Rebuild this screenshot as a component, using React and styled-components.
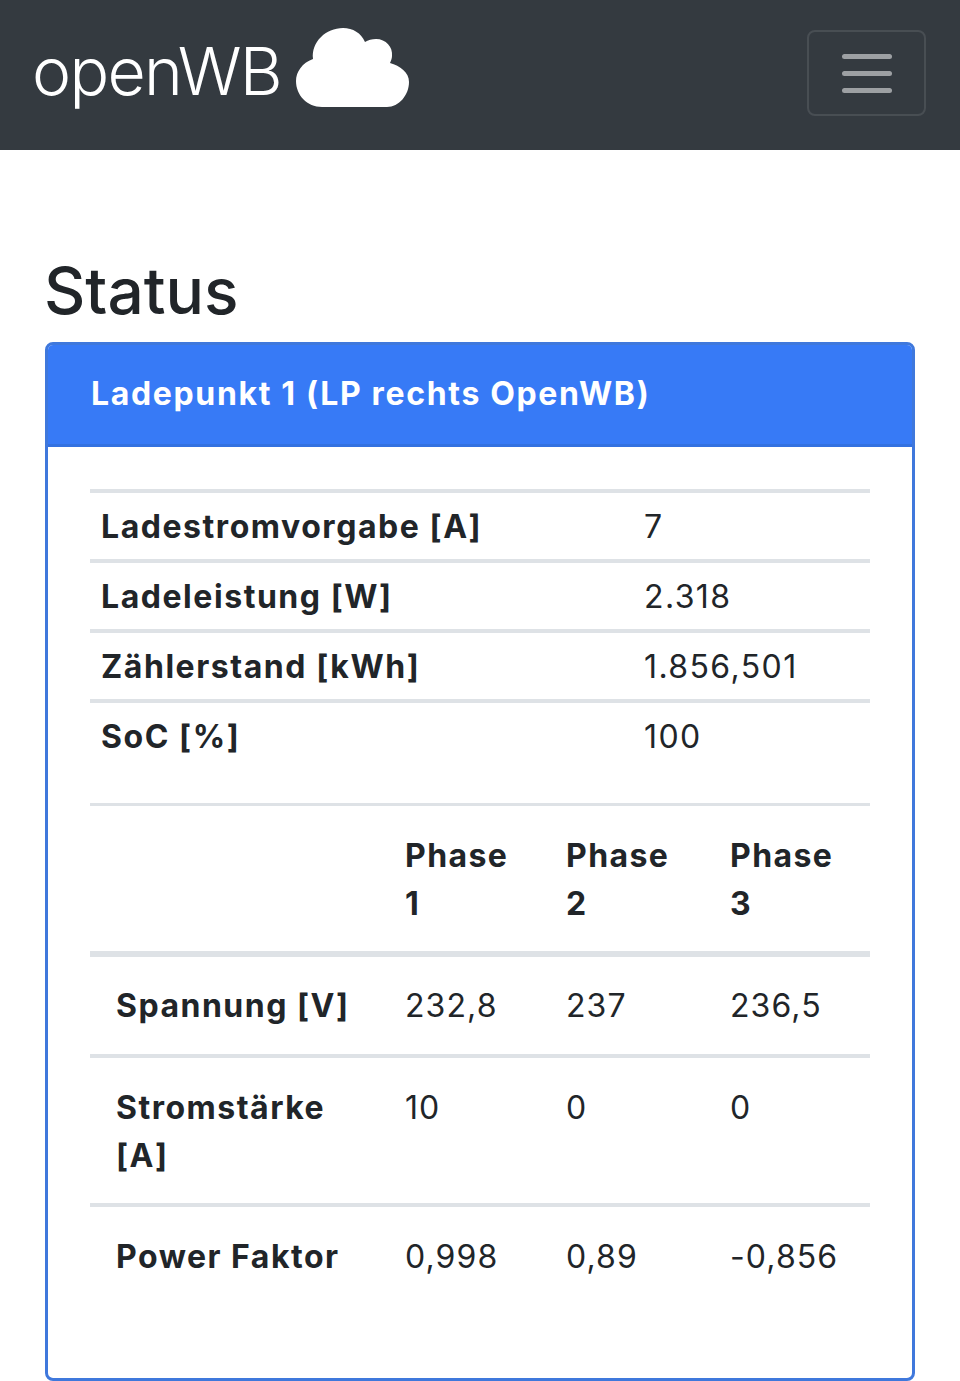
import styled, { createGlobalStyle } from "styled-components";

// Werte wie im Original, ein Ladepunkt
const summary = [
  { label: "Ladestromvorgabe [A]", value: "7" },
  { label: "Ladeleistung [W]", value: "2.318" },
  { label: "Zählerstand [kWh]", value: "1.856,501" },
  { label: "SoC [%]", value: "100" },
];

const phases = [
  { label: "Spannung [V]", values: ["232,8", "237", "236,5"] },
  { label: "Stromstärke [A]", values: ["10", "0", "0"] },
  { label: "Power Faktor", values: ["0,998", "0,89", "-0,856"] },
];

const GlobalStyle = createGlobalStyle`
  html, body {
    margin: 0;
    padding: 0;
    background: #fff;
    color: #212529;
    font-family: Inter, "Noto Sans", sans-serif;
    font-size: 32px;
    line-height: 48px;
    letter-spacing: 1.4px;
  }
`;

export default function App() {
  return (
    <>
      <GlobalStyle />
      <Navbar>
        <Brand>
          <BrandText>openWB</BrandText>
          <CloudIcon viewBox="0 0 113 80" aria-hidden="true">
            <path d="M26 79C11 79 0 67 0 53C0 44 6 35 17 31C15 14 30 0 47 0C57 0 65 5 69 14C72 12 76 11 80 11C90 11 97 19 96 28C96 30 95 33 94 35C104 38 113 44 113 54C113 67 103 79 91 79Z" fill="#fff" />
          </CloudIcon>
        </Brand>
        <Toggler aria-label="Menü">
          <TogglerBar />
          <TogglerBar />
          <TogglerBar />
        </Toggler>
      </Navbar>

      <Main>
        <PageTitle>Status</PageTitle>
        <Card>
          <CardHeader>Ladepunkt 1 (LP rechts OpenWB)</CardHeader>
          <CardBody>
            <SummaryTable>
              <colgroup>
                <col style={{ width: 543 }} />
                <col />
              </colgroup>
              <tbody>
                {summary.map(({ label, value }) => (
                  <tr key={label}>
                    <SummaryHead scope="row">{label}</SummaryHead>
                    <SummaryCell>{value}</SummaryCell>
                  </tr>
                ))}
              </tbody>
            </SummaryTable>

            <PhaseTable>
              <colgroup>
                <col style={{ width: 289 }} />
                <col style={{ width: 161 }} />
                <col style={{ width: 164 }} />
                <col />
              </colgroup>
              <thead>
                <tr>
                  <PhaseColHead />
                  <PhaseColHead>Phase 1</PhaseColHead>
                  <PhaseColHead>Phase 2</PhaseColHead>
                  <PhaseColHead>Phase 3</PhaseColHead>
                </tr>
              </thead>
              <tbody>
                {phases.map(({ label, values }) => (
                  <tr key={label}>
                    <PhaseRowHead scope="row">{label}</PhaseRowHead>
                    {values.map((v, i) => (
                      <PhaseCell key={i}>{v}</PhaseCell>
                    ))}
                  </tr>
                ))}
              </tbody>
            </PhaseTable>
          </CardBody>
        </Card>
      </Main>
    </>
  );
}

// ---------- Styles ----------

const Navbar = styled.nav`
  height: 150px;
  box-sizing: border-box;
  background: #343a40;
  display: flex;
  align-items: center;
  justify-content: space-between;
  padding: 0 34px 0 32px;
`;

const Brand = styled.a`
  display: flex;
  align-items: center;
  gap: 15px;
  color: #fff;
`;

const BrandText = styled.span`
  font-size: 66px;
  font-weight: 350;
  line-height: 80px;
  letter-spacing: -1.7px;
  margin-bottom: 8px;
`;

const CloudIcon = styled.svg`
  width: 113px;
  height: 80px;
  margin-bottom: 15px;
`;

const Toggler = styled.button`
  width: 119px;
  height: 86px;
  box-sizing: border-box;
  margin-bottom: 4px;
  background: transparent;
  border: 2px solid rgba(255, 255, 255, 0.1);
  border-radius: 8px;
  display: flex;
  flex-direction: column;
  align-items: center;
  justify-content: center;
  gap: 12px;
  padding: 0;
`;

const TogglerBar = styled.span`
  display: block;
  width: 50px;
  height: 5px;
  border-radius: 3px;
  background: rgba(255, 255, 255, 0.52);
`;

const Main = styled.main`
  padding: 0 45px;
`;

const PageTitle = styled.h1`
  margin: 0 0 0 -1px;
  padding-top: 100px;
  height: 192px;
  box-sizing: border-box;
  font-size: 64px;
  font-weight: 500;
  line-height: 82px;
  letter-spacing: 0;
`;

const Card = styled.section`
  height: 1039px;
  box-sizing: border-box;
  border: 3px solid #3f78dc;
  border-radius: 8px;
  overflow: hidden;
`;

const CardHeader = styled.h2`
  margin: -3px -3px 0;
  height: 105px;
  box-sizing: border-box;
  padding: 28px 46px 0;
  background: #377af6;
  border-bottom: 3px solid #3371e0;
  color: #fff;
  font-size: 32px;
  font-weight: 700;
  line-height: 48px;
  letter-spacing: 1.65px;
`;

const CardBody = styled.div`
  padding: 42px;
`;

const BaseTable = styled.table`
  width: 100%;
  border-collapse: collapse;
  table-layout: fixed;
`;

const SummaryTable = styled(BaseTable)`
  margin-bottom: 34px;
`;

const SummaryHead = styled.th`
  padding: 10px 11px 8px;
  border-top: 4px solid #dee2e6;
  text-align: left;
  font-weight: 700;
  letter-spacing: 1.55px;
`;

const SummaryCell = styled.td`
  padding: 10px 11px 8px;
  border-top: 4px solid #dee2e6;
`;

const PhaseTable = styled(BaseTable)``;

const PhaseColHead = styled.th`
  padding: 26px 26px 23px;
  border-top: 3px solid #dee2e6;
  border-bottom: 6px solid #dee2e6;
  text-align: left;
  font-weight: 700;
  letter-spacing: 1.4px;
`;

const PhaseRowHead = styled.th`
  padding: 26px 26px 23px;
  border-top: 4px solid #dee2e6;
  text-align: left;
  vertical-align: top;
  font-weight: 700;
  letter-spacing: 1.5px;
  tr:first-child > & {
    border-top: 0;
    padding: 25px 26px 24px;
  }
`;

const PhaseCell = styled.td`
  padding: 26px 26px 23px;
  border-top: 4px solid #dee2e6;
  vertical-align: top;
  letter-spacing: 1.1px;
  tr:first-child > & {
    border-top: 0;
    padding: 25px 26px 24px;
  }
`;
